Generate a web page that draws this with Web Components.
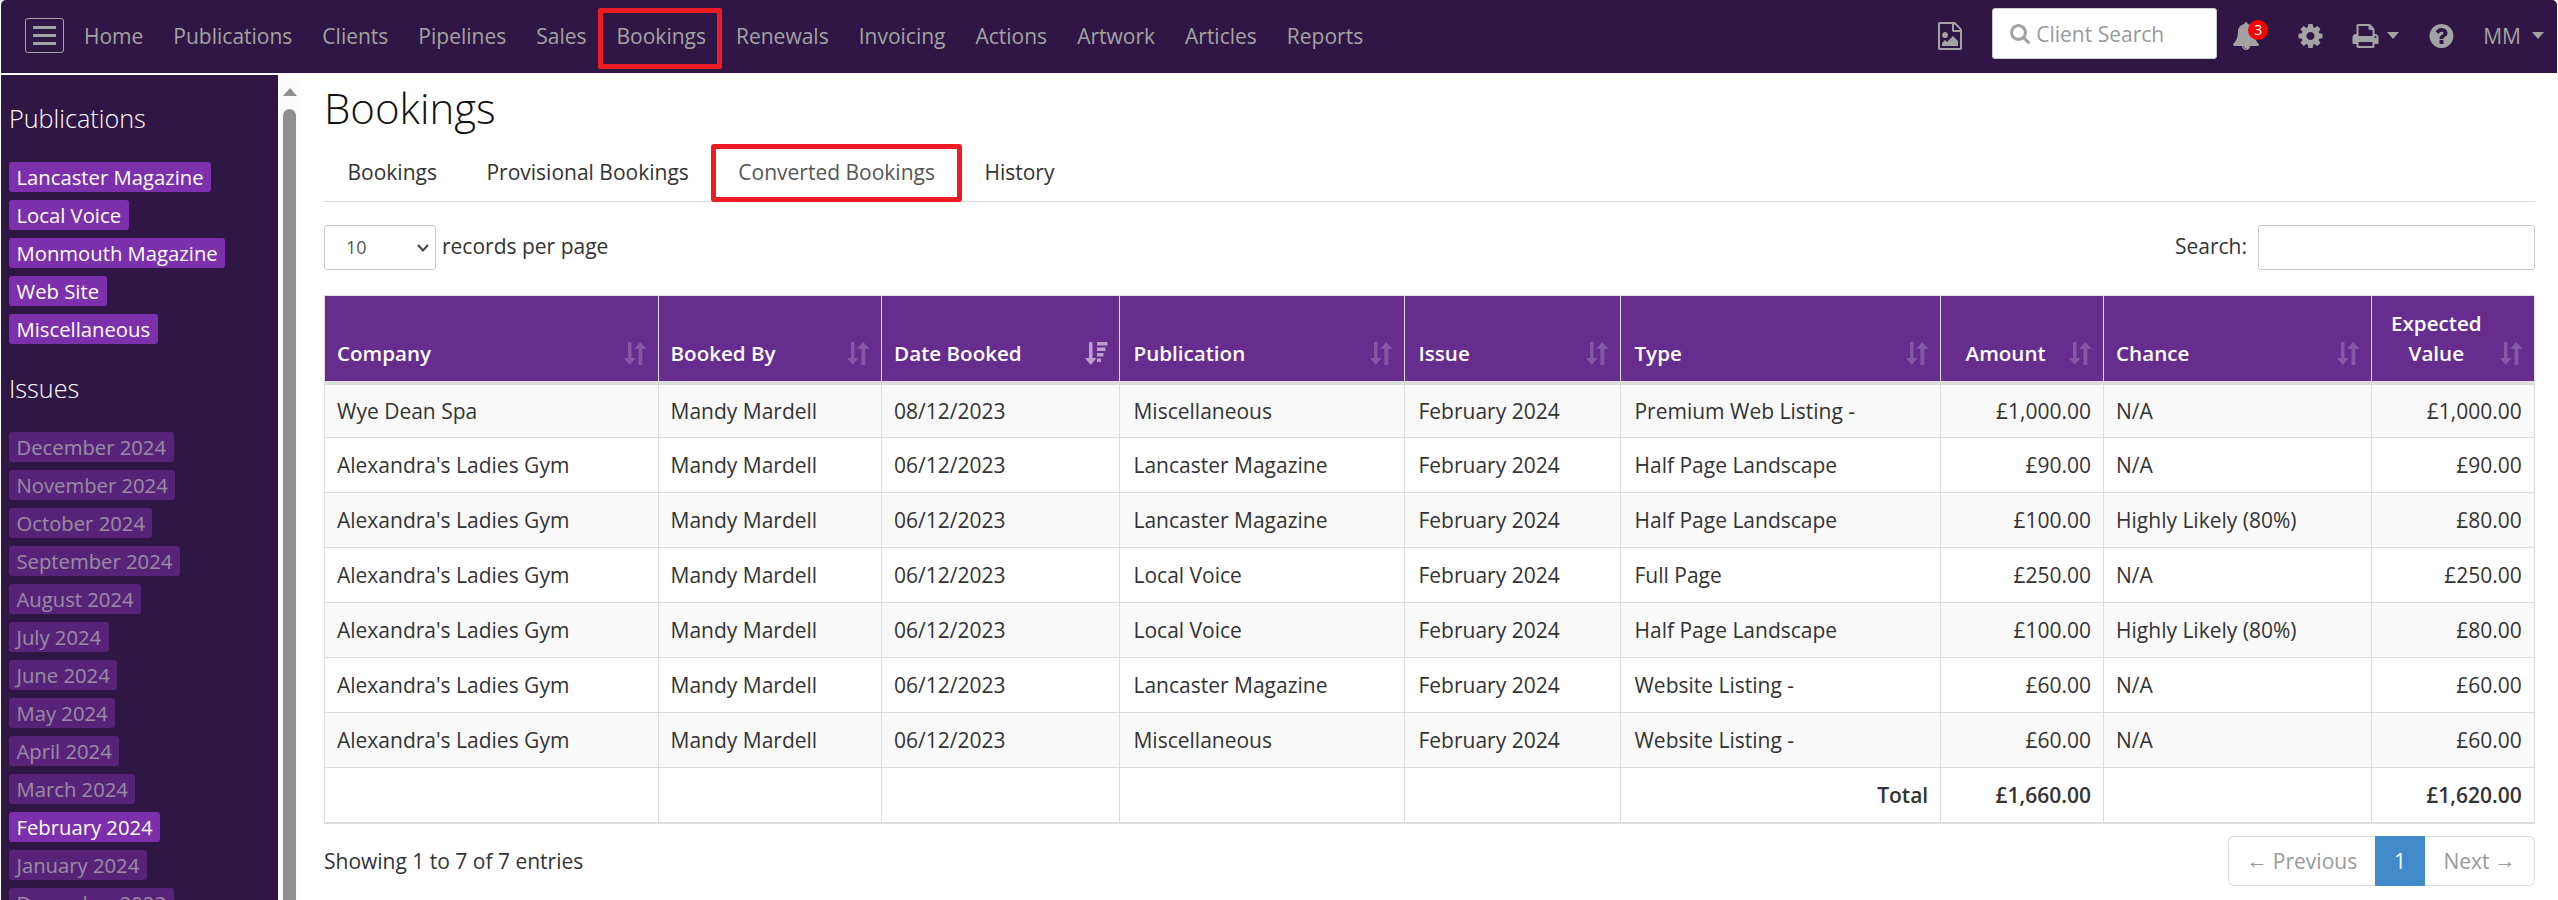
<!DOCTYPE html>
<html lang="en"><head><meta charset="utf-8"><title>Bookings</title>
<style>
html,body{margin:0;height:100%;background:#fff;overflow:hidden}
body{font-family:"Open Sans","Liberation Sans",sans-serif;font-size:21px;color:#333;padding:0 1px;box-sizing:border-box}
</style></head>
<body>
<app-shell>
  <top-nav slot="top"></top-nav>
  <side-bar slot="side"></side-bar>
  <fake-scroll slot="scroll"></fake-scroll>
  <bookings-page slot="main"></bookings-page>
</app-shell>
<script>
const P={
 search:'M1216 832q0-185-131.5-316.5t-316.5-131.5-316.5 131.5-131.5 316.5 131.5 316.5 316.5 131.5 316.5-131.5 131.5-316.5zm512 832q0 52-38 90t-90 38q-54 0-90-38l-343-342q-179 124-399 124-143 0-273.5-55.5t-225-150-150-225-55.5-273.5 55.5-273.5 150-225 225-150 273.5-55.5 273.5 55.5 225 150 150 225 55.5 273.5q0 220-124 399l343 343q37 37 37 90z',
 bell:'M912 1696q0-16-16-16-59 0-101.5-42.5t-42.5-101.5q0-16-16-16t-16 16q0 73 51.5 124.5t124.5 51.5q16 0 16-16zm816-288q0 52-38 90t-90 38h-448q0 106-75 181t-181 75-181-75-75-181h-448q-52 0-90-38t-38-90q50-42 91-88t85-119.5 74.5-158.5 50-206 19.5-260q0-152 117-282.5t307-158.5q-8-19-8-39 0-40 28-68t68-28 68 28 28 68q0 20-8 39 190 28 307 158.5t117 282.5q0 139 19.5 260t50 206 74.5 158.5 85 119.5 91 88z',
 cog:'M1152 896q0-106-75-181t-181-75-181 75-75 181 75 181 181 75 181-75 75-181zm512-109v222q0 12-8 23t-20 13l-185 28q-19 54-39 91 35 50 107 138 10 12 10 25t-9 23q-27 37-99 108t-94 71q-12 0-26-9l-138-108q-44 23-91 38-16 136-29 186-7 28-36 28h-222q-14 0-24.5-8.5t-11.5-21.5l-28-184q-49-16-90-37l-141 107q-10 9-25 9-14 0-25-11-126-114-165-168-7-10-7-23 0-12 8-23 15-21 51-66.5t54-70.5q-27-50-41-99l-183-27q-13-2-21-12.5t-8-23.5v-222q0-12 8-23t19-13l186-28q14-46 39-92-40-57-107-138-10-12-10-24 0-10 9-23 26-36 98.5-107.5t94.5-71.5q13 0 26 10l138 107q44-23 91-38 16-136 29-186 7-28 36-28h222q14 0 24.5 8.5t11.5 21.5l28 184q49 16 90 37l142-107q9-9 24-9 13 0 25 10 129 119 165 170 7 8 7 22 0 12-8 23-15 21-51 66.5t-54 70.5q26 50 41 98l183 28q13 2 21 12.5t8 23.5z',
 print:'M448 1536h896v-256h-896v256zm0-640h896v-384h-160q-40 0-68-28t-28-68v-160h-640v640zm1152 64q0-26-19-45t-45-19-45 19-19 45 19 45 45 19 45-19 19-45zm128 0v416q0 13-9.5 22.5t-22.5 9.5h-224v160q0 40-28 68t-68 28h-960q-40 0-68-28t-28-68v-160h-224q-13 0-22.5-9.5t-9.5-22.5v-416q0-79 56.5-135.5t135.5-56.5h64v-544q0-40 28-68t68-28h672q40 0 88 20t76 48l152 152q28 28 48 76t20 88v256h64q79 0 135.5 56.5t56.5 135.5z',
 help:'M1024 1376v-192q0-14-9-23t-23-9h-192q-14 0-23 9t-9 23v192q0 14 9 23t23 9h192q14 0 23-9t9-23zm256-672q0-88-55.5-163t-138.5-116-170-41q-243 0-371 213-15 24 8 42l132 100q7 6 19 6 16 0 25-12 53-68 86-92 34-24 86-24 48 0 85.5 26t37.5 59q0 38-20 61t-68 45q-63 28-115.5 86.5t-52.5 125.5v36q0 14 9 23t23 9h192q14 0 23-9t9-23q0-19 21.5-49.5t54.5-49.5q32-18 49-28.5t46-35 44.5-48 28-60.5 12.5-81zm384 192q0 209-103 385.5t-279.5 279.5-385.5 103-385.5-103-279.5-279.5-103-385.5 103-385.5 279.5-279.5 385.5-103 385.5 103 279.5 279.5 103 385.5z',
 file:'M1596 380q28 28 48 76t20 88v1152q0 40-28 68t-68 28h-1344q-40 0-68-28t-28-68v-1600q0-40 28-68t68-28h896q40 0 88 20t76 48zm-444-244v376h376q-10-29-22-41l-313-313q-12-12-41-22zm384 1528v-1024h-416q-40 0-68-28t-28-68v-416h-768v1536h1280zm-128-448v320h-1024v-192l192-192 128 128 384-384zm-832-192q-80 0-136-56t-56-136 56-136 136-56 136 56 56 136-56 136-136 56z'
};
const ic=(n,vb,w,h)=>`<svg viewBox="${vb}" width="${w}" height="${h}" fill="#a3a3a3" style="display:block;flex:none"><path d="${P[n]}"/></svg>`;
const def=(name,html)=>{
  const C=class extends HTMLElement{
    constructor(){super();this.attachShadow({mode:'open'}).innerHTML=typeof html==='function'?html(this):html;}
  };
  customElements.define(name,C);
};

def('app-shell',`<style>
:host{display:grid;grid-template-columns:277px 22px 1fr;grid-template-rows:73px 1fr;height:100vh;overflow:hidden;row-gap:1.5px}
.t{grid-column:1/4;display:block}
</style><div class="t"><slot name="top"></slot></div><slot name="side"></slot><slot name="scroll"></slot><slot name="main"></slot>`);

def('nav-link',`<style>
:host{display:flex;align-items:center;height:100%;padding:0 15px;position:relative;color:#a3a3a3;font-size:21px;white-space:nowrap;flex:none}
:host([marked])::after{content:"";position:absolute;left:-4px;right:-1px;top:8px;bottom:2px;border:5px solid #ed1c24;border-radius:2px;box-sizing:border-box}
</style><slot></slot>`);

def('top-nav',`<style>
:host{display:flex;align-items:center;height:73px;background:#301645;border-radius:5px 5px 0 0;padding:0 13px 2px 24px;box-sizing:border-box}
.burger{width:39px;height:35px;box-sizing:border-box;border:1px solid #a3a3a3;border-radius:3px;display:flex;flex-direction:column;justify-content:center;align-items:center;gap:5px;margin-right:5px;flex:none}
.burger i{display:block;width:23px;height:3px;background:#a3a3a3}
.links{display:flex;height:100%;align-items:center;flex:1}
.r{display:flex;align-items:center;height:100%;color:#a3a3a3;flex:none}
.box{width:225px;height:51px;box-sizing:border-box;background:#fff;border:1px solid #ccc;border-radius:3px;margin:0 16px 4px 30px;display:flex;align-items:center;padding-left:17px;gap:6px;color:#999;font-size:21px}
.bell{position:relative;margin-right:39px}
.badge{position:absolute;left:15px;top:-2px;width:20px;height:20px;border-radius:50%;background:#f00;color:#fff;font-size:14px;line-height:20px;text-align:center}
.caret{width:0;height:0;border:6px solid transparent;border-top:7px solid #a3a3a3;border-bottom:0;flex:none}
</style>
<div class="burger"><i></i><i></i><i></i></div>
<div class="links">
<nav-link>Home</nav-link><nav-link>Publications</nav-link><nav-link>Clients</nav-link><nav-link>Pipelines</nav-link><nav-link>Sales</nav-link><nav-link marked>Bookings</nav-link><nav-link>Renewals</nav-link><nav-link>Invoicing</nav-link><nav-link>Actions</nav-link><nav-link>Artwork</nav-link><nav-link>Articles</nav-link><nav-link>Reports</nav-link>
</div>
<div class="r">
${ic('file','128 0 1536 1792',24,28)}
<div class="box">${ic('search','64 128 1664 1664',20,20)}<span>Client Search</span></div>
<div class="bell">${ic('bell','64 0 1664 1792',26,28)}<span class="badge">3</span></div>
<div style="margin-right:29px">${ic('cog','128 128 1536 1536',25,24)}</div>
<div style="margin-right:8px">${ic('print','64 128 1664 1536',27,24)}</div>
<span class="caret" style="margin-right:30px"></span>
<div style="margin-right:29px">${ic('help','128 128 1536 1536',25,24)}</div>
<span style="font-size:21px;margin-right:11px">MM</span>
<span class="caret"></span>
</div>`);

def('tag-chip',`<style>
:host{display:block;height:30px;margin-bottom:8px}
span{display:inline-block;height:30px;line-height:30px;padding:0 7.5px;background:#7c30ac;color:#fff;border-radius:3px;font-size:20.25px;white-space:nowrap}
:host([off]) span{opacity:.5}
</style><span><slot></slot></span>`);

def('side-bar',()=>{
 const pubs=['Lancaster Magazine','Local Voice','Monmouth Magazine','Web Site','Miscellaneous'];
 const iss=['December 2024','November 2024','October 2024','September 2024','August 2024','July 2024','June 2024','May 2024','April 2024','March 2024','February 2024','January 2024','December 2023'];
 return `<style>
:host{display:block;background:#301645;overflow:hidden;padding:0 0 0 8px;box-sizing:border-box;color:#fff;min-height:0}
h4{font-weight:300;font-size:25.2px;line-height:33px;margin:0;white-space:nowrap;padding-left:0}
.a{margin-top:27px;margin-bottom:27.5px}
.b{margin-top:27.5px;margin-bottom:27.5px}
</style>
<h4 class="a">Publications</h4>
${pubs.map(p=>`<tag-chip>${p}</tag-chip>`).join('')}
<h4 class="b">Issues</h4>
${iss.map(p=>`<tag-chip ${p==='February 2024'?'':'off'}>${p}</tag-chip>`).join('')}`;
});

def('fake-scroll',`<style>
:host{display:flex;flex-direction:column;align-items:flex-start;background:#fcfcfc;padding:13px 0 0 5px;box-sizing:border-box;min-height:0;overflow:hidden}
.up{width:0;height:0;border:7.5px solid transparent;border-bottom:8px solid #8f8f8f;border-top:0;flex:none}
.th{width:13px;flex:1;margin-top:13px;background:#8f8f8f;border-radius:7px 7px 0 0;margin-bottom:-20px}
</style><div class="up"></div><div class="th"></div>`);

def('tab-item',`<style>
:host{display:flex;align-items:center;height:100%;padding:0 23.5px;margin-right:2.5px;color:#333;font-size:21px;position:relative;white-space:nowrap;flex:none}
:host([marked]){color:#555}
:host([marked])::after{content:"";position:absolute;left:-3.5px;right:-3.5px;top:0;bottom:-1px;border:5px solid #ed1c24;border-radius:3px;box-sizing:border-box}
</style><slot></slot>`);

def('tab-bar',`<style>
:host{display:flex;height:64px;box-sizing:border-box;border-bottom:1px solid #ddd;padding-top:6px}
</style><slot></slot>`);

def('sort-icon',(el)=>{
 const active=el.hasAttribute('active');
 const d=active
  ?'M4 0h3.5v16H11.5L5.75 23 0 16h4zM12 0h10.5v3.5H12zM12 5.5h8.5V9H12zM12 11h6.5v3.5H12zM12 16.5h4V20h-4z'
  :'M4 0h3.5v16H11.5L5.75 23 0 16h4zM16.3 0l6.2 7h-4.2v16h-3.8V7H10z';
 return `<style>:host{position:absolute;right:11px;bottom:16px;width:23px;height:23px;display:block;opacity:${active?.55:.2}}svg{display:block}</style><svg viewBox="0 0 23 23" width="23" height="23" fill="#fff"><path d="${d}"/></svg>`;
});

def('bookings-table',()=>{
 const w=[333.5,223.6,238.4,285,216,319.7,162.9,267.8,162.9];
 const heads=[['Company'],['Booked By'],['Date Booked',1],['Publication'],['Issue'],['Type'],['Amount',0,1],['Chance'],['Expected Value',0,1]];
 const A="Alexandra's Ladies Gym",M='Mandy Mardell',D='06/12/2023',F='February 2024',LM='Lancaster Magazine',LV='Local Voice',HP='Half Page Landscape',HL='Highly Likely (80%)',W='Website Listing -',N='N/A';
 const rows=[
 ['Wye Dean Spa',M,'08/12/2023','Miscellaneous',F,'Premium Web Listing -','£1,000.00',N,'£1,000.00'],
 [A,M,D,LM,F,HP,'£90.00',N,'£90.00'],
 [A,M,D,LM,F,HP,'£100.00',HL,'£80.00'],
 [A,M,D,LV,F,'Full Page','£250.00',N,'£250.00'],
 [A,M,D,LV,F,HP,'£100.00',HL,'£80.00'],
 [A,M,D,LM,F,W,'£60.00',N,'£60.00'],
 [A,M,D,'Miscellaneous',F,W,'£60.00',N,'£60.00']];
 return `<style>
:host{display:block;width:2210px}
table{border-collapse:collapse;table-layout:fixed;width:2210px;font-size:21px;line-height:30px;color:#333}
th,td{padding:0 12px;box-sizing:border-box;border:1px solid #ddd;white-space:nowrap;overflow:hidden}
th:nth-child(n+4):nth-child(-n+6),td:nth-child(n+4):nth-child(-n+6){padding-left:13px}
thead th{height:87px;background:#662d8f;color:#fff;font-weight:600;font-size:20.6px;text-align:left;vertical-align:bottom;padding-bottom:13px;position:relative;border-bottom:4px solid #ddd;border-color:#ddd;white-space:normal}
thead th.c{text-align:center;padding-right:45px}
tbody tr{height:55px}
tbody tr:nth-child(odd) td{background:#f9f9f9}
td.n{text-align:right}
tfoot tr{height:55px}
tfoot td{font-weight:600;border-bottom:2px solid #ddd}
</style>
<table><colgroup>${w.map(x=>`<col style="width:${x}px">`).join('')}</colgroup>
<thead><tr>${heads.map(h=>`<th class="${h[2]?'c':''}">${h[0]}<sort-icon ${h[1]?'active':''}></sort-icon></th>`).join('')}</tr></thead>
<tbody>${rows.map(r=>`<tr>${r.map((c,i)=>`<td class="${i==6||i==8?'n':''}">${c}</td>`).join('')}</tr>`).join('')}</tbody>
<tfoot><tr><td></td><td></td><td></td><td></td><td></td><td class="n">Total</td><td class="n">£1,660.00</td><td></td><td class="n">£1,620.00</td></tr></tfoot>
</table>`;
});

def('page-pager',`<style>
:host{display:flex;height:50px;box-sizing:border-box;font-size:21px;flex:none;color:#999}
a{display:flex;align-items:center;justify-content:center;gap:5px;border:1px solid #ddd;background:#fff;box-sizing:border-box;height:50px}
b{font:400 21px "Liberation Sans",sans-serif}
.p{width:147px;border-right:0;border-radius:6px 0 0 6px}
.o{width:50px;background:#428bca;border-color:#428bca;color:#fff}
.x{width:110px;border-left:0;border-radius:0 6px 6px 0}
</style><a class="p"><b>←</b>Previous</a><a class="o">1</a><a class="x">Next<b>→</b></a>`);

def('bookings-page',`<style>
:host{display:block;padding:0 22px 0 24px;min-width:0;overflow:hidden;background:#fff}
h1{font-weight:300;font-size:42px;line-height:66px;height:63px;margin:0;color:#111;white-space:nowrap}
.tools{display:flex;justify-content:space-between;align-items:center;margin-top:23px;height:45px;width:2211px}
.l,.rr{display:flex;align-items:center;gap:6px}
.rr{gap:11px}
.tools span.tx{margin-bottom:3px}
.sel{position:relative;display:block;width:112px;height:45px;flex:none}
select{appearance:none;-webkit-appearance:none;width:112px;height:45px;box-sizing:border-box;border:1px solid #ccc;border-radius:3px;background:#fff;color:#555;font:18px "Open Sans",sans-serif;padding-left:21px;margin:0;display:block}
.sel svg{position:absolute;left:93px;top:19px;pointer-events:none}
input{width:277px;height:45px;box-sizing:border-box;border:1px solid #ccc;border-radius:3px;background:#fff;margin:0}
.t{margin-top:25.5px}
.foot{display:flex;justify-content:space-between;align-items:center;margin-top:12px;width:2211px}
</style>
<h1>Bookings</h1>
<tab-bar><tab-item>Bookings</tab-item><tab-item>Provisional Bookings</tab-item><tab-item marked>Converted Bookings</tab-item><tab-item>History</tab-item></tab-bar>
<div class="tools"><div class="l"><span class="sel"><select><option>10</option><option>25</option></select><svg width="12" height="8" viewBox="0 0 12 8"><path d="M1 1l5 5.5L11 1" fill="none" stroke="#444" stroke-width="2"/></svg></span><span class="tx">records per page</span></div><div class="rr"><span class="tx">Search:</span><input></div></div>
<bookings-table class="t"></bookings-table>
<div class="foot"><span>Showing 1 to 7 of 7 entries</span><page-pager></page-pager></div>`);
</script>
</body></html>
